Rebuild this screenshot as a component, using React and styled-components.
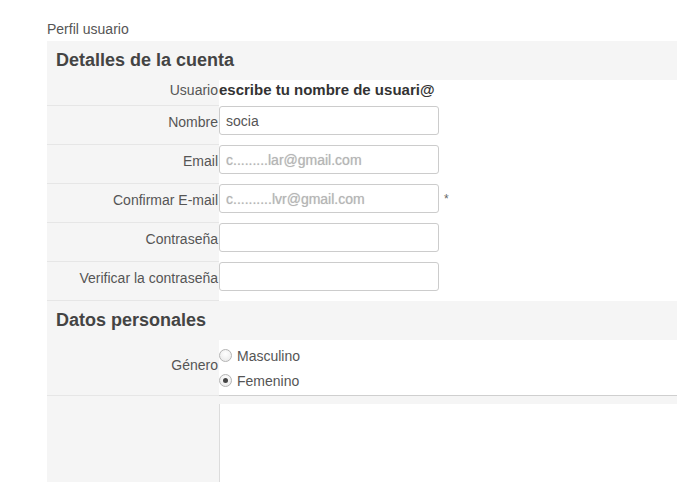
import React from 'react';
import styled, { createGlobalStyle } from 'styled-components';

const GlobalStyle = createGlobalStyle`
  html, body {
    margin: 0;
    padding: 0;
    background: #ffffff;
    font-family: "Liberation Sans", Arial, Helvetica, sans-serif;
    color: #555;
    overflow: hidden;
  }
`;

const Page = styled.div`
  padding-left: 47px;
  width: 630px;
`;

const PageTitle = styled.div`
  padding-top: 20px;
  padding-bottom: 3px;
  font-size: 14px;
  line-height: 18px;
  color: #555;
`;

const SectionHeader = styled.h2`
  margin: 0;
  height: ${props => props.$h}px;
  line-height: ${props => props.$h}px;
  padding-left: 9px;
  background: #f5f5f5;
  font-size: 18px;
  font-weight: bold;
  color: #444;
`;

const Row = styled.div`
  display: grid;
  grid-template-columns: 172px 1fr;
`;

const LabelCell = styled.div`
  background: #f5f5f5;
  border-bottom: 1px solid #e6e6e6;
  box-sizing: border-box;
  height: ${props => props.$h}px;
  padding-top: ${props => props.$pt}px;
  padding-right: 1px;
  text-align: right;
  font-size: 14px;
  line-height: 20px;
  color: #555;
  white-space: nowrap;
`;

const FieldCell = styled.div`
  display: flex;
  align-items: flex-start;
  background: #ffffff;
`;

const StaticValue = styled.div`
  font-size: 15px;
  line-height: 20px;
  font-weight: bold;
  color: #333;
  white-space: nowrap;
`;

const TextInput = styled.input`
  box-sizing: border-box;
  width: 220px;
  height: 29px;
  margin: 0;
  padding: 0 6px;
  border: 1px solid #cccccc;
  border-radius: 3px;
  font-family: "Liberation Sans", Arial, sans-serif;
  font-size: 14px;
  color: ${props => (props.$faded ? '#b5b5b5' : '#555')};
  text-shadow: ${props => (props.$faded ? '0 0 1px #ccc' : 'none')};
  background: #fff;
  outline: none;
`;

const Required = styled.span`
  margin-left: 5px;
  margin-top: 8px;
  font-size: 12px;
  color: #666;
`;

const RadioGroup = styled.div`
  flex: 1;
  padding-top: 3px;
  height: 56px;
  box-sizing: border-box;
  border-bottom: 1px solid #cfcfcf;
`;

const RadioOption = styled.label`
  display: flex;
  align-items: center;
  height: 25px;
  font-size: 14px;
  color: #555;
`;

const RadioDot = styled.span`
  box-sizing: border-box;
  width: 13px;
  height: 13px;
  margin-right: 5px;
  border-radius: 50%;
  border: 1px solid #b4b4b4;
  background: radial-gradient(circle at 50% 35%, #ffffff 0%, #e6e6e6 100%);
  display: flex;
  align-items: center;
  justify-content: center;

  &::after {
    content: '';
    display: ${props => (props.$checked ? 'block' : 'none')};
    width: 5px;
    height: 5px;
    border-radius: 50%;
    background: #444;
  }
`;

const ExtraCell = styled.div`
  background: #f5f5f5;
  padding-top: 8px;
`;

const ExtraBox = styled.div`
  height: 90px;
  background: #ffffff;
  border-left: 1px solid #dcdcdc;
`;

const fields = [
  { label: 'Nombre', value: 'socia' },
  { label: 'Email', value: 'c.........lar@gmail.com', faded: true },
  { label: 'Confirmar E-mail', value: 'c..........lvr@gmail.com', faded: true, required: true },
  { label: 'Contraseña', value: '', type: 'password' },
  { label: 'Verificar la contraseña', value: '', type: 'password' },
];

const App = () => {
  return (
    <>
      <GlobalStyle />
      <Page>
        <PageTitle>Perfil usuario</PageTitle>
        <SectionHeader $h={39}>Detalles de la cuenta</SectionHeader>
        <Row>
          <LabelCell $h={26} $pt={0}>Usuario</LabelCell>
          <FieldCell>
            <StaticValue>escribe tu nombre de usuari@</StaticValue>
          </FieldCell>
        </Row>
        {fields.map((f) => (
          <Row key={f.label}>
            <LabelCell $h={39} $pt={6}>{f.label}</LabelCell>
            <FieldCell>
              <TextInput
                type={f.type || 'text'}
                defaultValue={f.value}
                $faded={f.faded}
                readOnly
              />
              {f.required && <Required>*</Required>}
            </FieldCell>
          </Row>
        ))}
        <SectionHeader $h={39}>Datos personales</SectionHeader>
        <Row>
          <LabelCell $h={56} $pt={15}>Género</LabelCell>
          <FieldCell>
            <RadioGroup>
              <RadioOption>
                <RadioDot />
                Masculino
              </RadioOption>
              <RadioOption>
                <RadioDot $checked />
                Femenino
              </RadioOption>
            </RadioGroup>
          </FieldCell>
        </Row>
        <Row>
          <LabelCell $h={98} $pt={0} />
          <ExtraCell>
            <ExtraBox />
          </ExtraCell>
        </Row>
      </Page>
    </>
  );
};

export default App;
